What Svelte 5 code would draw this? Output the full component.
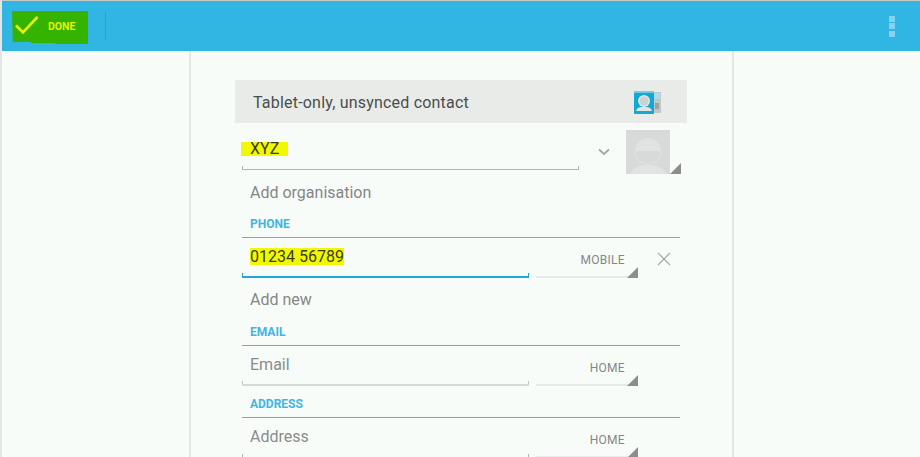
<script>
  const highlight = 'XYZ';
</script>

<div class="screen">
  <header class="action-bar">
    <button type="button" class="done">
      <svg width="26" height="24" viewBox="0 0 26 24" aria-hidden="true">
        <path d="M2 11.5 L9 18.5 L23.5 3" fill="none" stroke="#e6f00a" stroke-width="2.6" />
      </svg>
      <span>DONE</span>
    </button>
    <span class="divider"></span>
    <span class="overflow"><i></i><i></i><i></i></span>
  </header>

  <main class="page">
    <section class="sheet">
      <div class="account">
        <span>Tablet-only, unsynced contact</span>
        <svg class="account-icon" width="27" height="23" viewBox="0 0 27 23" aria-hidden="true">
          <rect x="19" y="1" width="8" height="21" fill="#c2c6c4" />
          <rect x="20" y="2" width="6" height="6" fill="#a6deef" />
          <rect x="21" y="12" width="4" height="6" fill="#9ea2a0" />
          <rect x="0" y="0" width="20" height="23" rx="1" fill="#12a8d4" />
          <rect x="0" y="0" width="20" height="2" fill="#6fcbe6" />
          <circle cx="10" cy="10" r="6" fill="#dfe6e4" />
          <circle cx="10" cy="10" r="4.5" fill="#c9d3d2" />
          <path d="M2 20 Q3 16 8 16 H12 Q17 16 18 20 Z" fill="#dfe6e4" />
        </svg>
      </div>

      <div class="name-row">
        <div class="name-field underlined"><span class="marked name">{highlight}</span></div>
        <svg class="chevron" width="12" height="8" viewBox="0 0 12 8" aria-hidden="true">
          <path d="M1 1.5 L6 6 L11 1.5" fill="none" stroke="#a3a6a5" stroke-width="1.8" />
        </svg>
        <div class="photo">
          <svg width="44" height="44" viewBox="0 0 44 44" aria-hidden="true">
            <rect width="44" height="44" fill="#d8d9d9" />
            <circle cx="22" cy="21" r="13" fill="#e1e2e2" />
            <path d="M9 21 H35 A13 13 0 0 1 9 21 Z" fill="#d8d9d9" />
            <path d="M9 21 A13 13 0 0 0 35 21" fill="none" stroke="#e1e2e2" stroke-width="1.2" />
            <path d="M4 44 Q6 36 18 35 H26 Q38 36 40 44 Z" fill="#e1e2e2" />
          </svg>
          <span class="corner"></span>
        </div>
      </div>

      <div class="add-line first">Add organisation</div>

      <h2>PHONE</h2>
      <div class="field-row">
        <div class="value-field underlined focused"><span class="marked number">01234 56789</span></div>
        <div class="type-field"><span>MOBILE</span><span class="corner"></span></div>
        <svg class="remove" width="14" height="14" viewBox="0 0 14 14" aria-hidden="true">
          <path d="M1 1 L13 13 M13 1 L1 13" fill="none" stroke="#a5a8a7" stroke-width="1.2" />
        </svg>
      </div>
      <div class="add-line next">Add new</div>

      <h2>EMAIL</h2>
      <div class="field-row">
        <div class="value-field underlined soft"><span class="hint">Email</span></div>
        <div class="type-field"><span>HOME</span><span class="corner"></span></div>
      </div>

      <h2 class="tight">ADDRESS</h2>
      <div class="field-row">
        <div class="value-field underlined"><span class="hint">Address</span></div>
        <div class="type-field"><span>HOME</span><span class="corner"></span></div>
      </div>
    </section>
  </main>
</div>

<style>
  :global(body) {
    margin: 0;
    background: #f8fcf9;
  }

  .screen {
    width: 920px;
    height: 457px;
    overflow: hidden;
    font-family: Roboto, "Liberation Sans", sans-serif;
    color: #8a8c8b;
    border-left: 2px solid #e4e6e4;
    box-sizing: border-box;
  }

  .action-bar {
    display: flex;
    align-items: center;
    height: 50px;
    margin-left: -2px;
    border-top: 1px solid #c8c8c4;
    background: #31b5e3;
  }

  .done {
    display: flex;
    align-items: center;
    gap: 8px;
    width: 76px;
    height: 33px;
    margin: 3px 0 0 12px;
    padding: 0 0 3px 2px;
    border: 0;
    background: #34b400;
    clip-path: polygon(0 0, 100% 0, 100% 100%, 57% 100%, 57% 97%, 25% 97%, 25% 94%, 1% 94%);
    color: #e6f00a;
    font-family: inherit;
    font-size: 10.5px;
    font-weight: 700;
  }

  .divider {
    width: 1px;
    height: 28px;
    margin-left: 17px;
    background: #2a9fcb;
  }

  .overflow {
    display: flex;
    flex-direction: column;
    gap: 1.5px;
    margin-left: auto;
    margin-right: 25px;
  }

  .overflow i {
    width: 6px;
    height: 6px;
    background: #86d2ee;
  }

  .page {
    padding-left: 187px;
  }

  .sheet {
    box-sizing: border-box;
    width: 545px;
    height: 406px;
    padding: 29px 44px 0 44px;
    border-left: 2px solid #e4e6e4;
    border-right: 2px solid #e4e6e4;
  }

  .account {
    display: flex;
    align-items: center;
    justify-content: space-between;
    box-sizing: border-box;
    width: 452px;
    height: 43px;
    padding: 1px 26px 0 18px;
    background: #e8ebe8;
    color: #4c4e4d;
    font-size: 16px;
    letter-spacing: 0.2px;
  }

  .account-icon {
    margin-top: 1px;
  }

  .name-row {
    display: flex;
    align-items: flex-start;
    height: 51px;
    margin-left: 7px;
  }

  .name-field {
    width: 337px;
    height: 47px;
    padding-top: 19px;
    box-sizing: border-box;
  }

  .underlined {
    border-bottom: 1px solid #b3b5b4;
    position: relative;
  }

  .underlined::before,
  .underlined::after {
    content: '';
    position: absolute;
    bottom: 0;
    width: 1px;
    height: 3px;
    background-color: #b3b5b4;
  }

  .underlined::before {
    left: 0;
  }

  .underlined::after {
    right: 0;
  }

  .marked {
    display: block;
    width: fit-content;
    background: #f2f800;
    color: #3a3c1c;
    font-size: 16px;
    line-height: 14px;
  }

  .name {
    padding: 0 9px 0 9px;
    margin-left: -1px;
  }

  .chevron {
    margin: 25px 0 0 19px;
  }

  .photo {
    position: relative;
    width: 44px;
    height: 44px;
    margin: 7px 0 0 16px;
  }

  .photo svg {
    display: block;
  }

  .corner {
    position: absolute;
    right: -11px;
    bottom: 0;
    width: 11px;
    height: 11px;
    background: #8c8e8d;
    clip-path: polygon(100% 0, 100% 100%, 0 100%);
  }

  .add-line {
    height: 21px;
    margin-left: 15px;
    font-size: 16px;
    line-height: 21px;
    color: #858786;
  }

  .add-line.first {
    margin-top: 8px;
  }

  .add-line.next {
    margin-top: 11px;
    margin-bottom: 1px;
  }

  h2 {
    box-sizing: border-box;
    width: 438px;
    height: 35px;
    margin: 0 0 0 7px;
    padding: 14px 0 0 8px;
    border-bottom: 1px solid #52b5dc;
    color: #3fb6e6;
    font-size: 12px;
    font-weight: 700;
    line-height: 14px;
  }

  h2.tight {
    height: 32px;
    padding-top: 11px;
  }

  .field-row {
    display: flex;
    align-items: flex-end;
    height: 40px;
    margin-left: 7px;
  }

  .value-field {
    box-sizing: border-box;
    width: 287px;
    height: 40px;
    padding: 9px 0 0 8px;
    font-size: 16px;
  }

  .focused {
    padding-top: 10px;
    border-bottom: 2px solid #1fa8dc;
  }

  .number {
    line-height: 17px;
  }

  .focused::before,
  .focused::after {
    background-color: #1fa8dc;
  }

  .soft {
    border-bottom: 2px solid #d6d8d7;
  }

  .soft::before,
  .soft::after {
    background-color: #c4c6c5;
  }

  .hint {
    color: #8a8c8b;
  }

  .type-field {
    position: relative;
    box-sizing: border-box;
    width: 102px;
    height: 40px;
    margin-left: 7px;
    padding: 15px 13px 0 0;
    border-bottom: 2px solid #e8eae9;
    font-size: 12px;
    letter-spacing: 0.3px;
    color: #858786;
    text-align: right;
  }

  .type-field .corner {
    right: 0;
    bottom: -2px;
  }

  .remove {
    margin: 0 0 12px 19px;
  }
</style>
